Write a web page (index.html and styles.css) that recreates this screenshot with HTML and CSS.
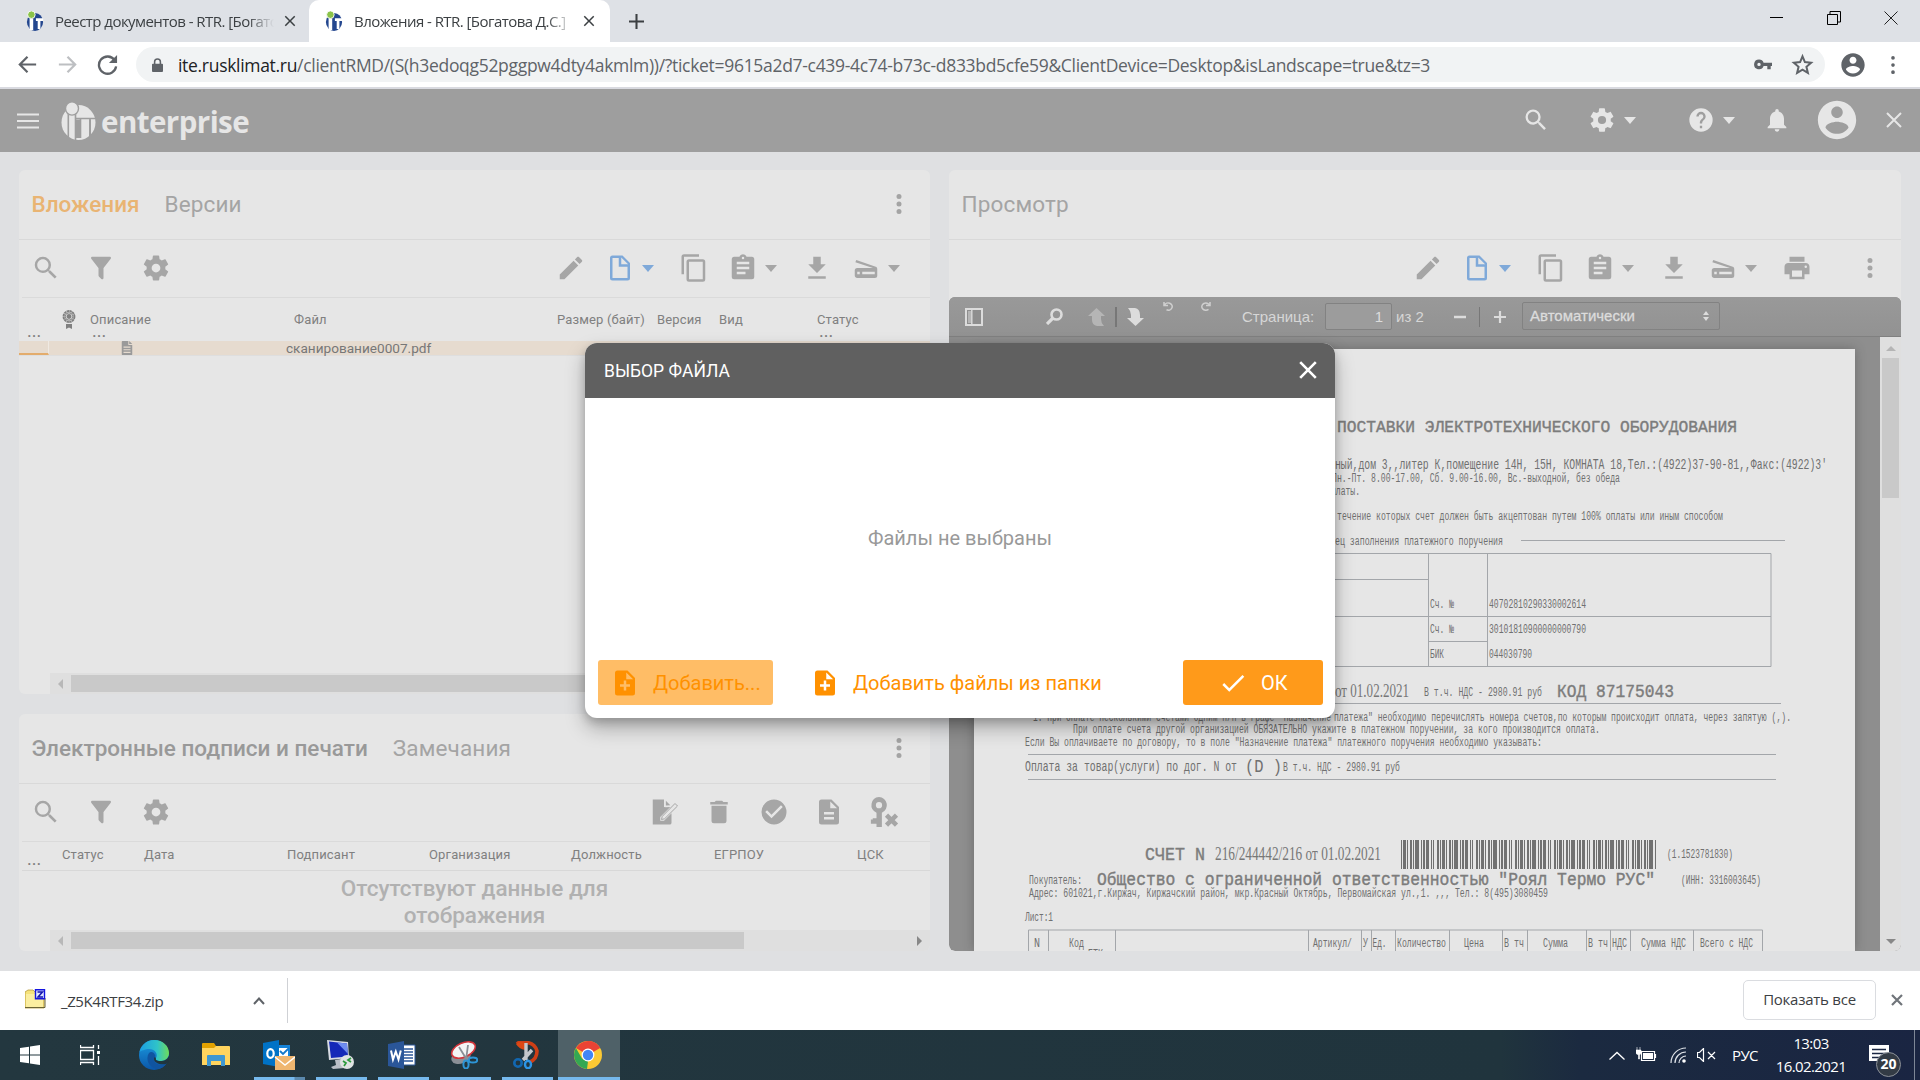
FILE: index.html
```html
<!DOCTYPE html>
<html lang="ru">
<head>
<meta charset="utf-8">
<title>Вложения - RTR.</title>
<link rel="stylesheet" href="styles.css">
</head>
<body>
<svg class="sprite" aria-hidden="true">
  <symbol id="search" viewBox="0 0 24 24"><path d="M15.5 14h-.79l-.28-.27A6.47 6.47 0 0 0 16 9.5 6.5 6.5 0 1 0 9.500 16c1.610 0 3.090-.59 4.230-1.570l.27.28v.79l5 4.990L20.490 19l-4.990-5zm-6 0C7.010 14 5 11.990 5 9.500S7.010 5 9.500 5 14 7.010 14 9.500 11.990 14 9.500 14z"/></symbol>
  <symbol id="filter" viewBox="0 0 24 24"><path d="M14 12v7.880c.04.3-.06.62-.29.83a1 1 0 0 1-1.410 0l-2.010-2.010a.99.99 0 0 1-.29-.83V12h-.03L4.210 4.620a1 1 0 0 1 .17-1.400c.19-.14.4-.22.62-.22h14c.22 0 .43.08.62.22a1 1 0 0 1 .17 1.400L14.030 12z"/></symbol>
  <symbol id="gear" viewBox="0 0 24 24"><path d="M12 15.500A3.500 3.500 0 0 1 8.500 12 3.500 3.500 0 0 1 12 8.500a3.500 3.500 0 0 1 3.500 3.500 3.500 3.500 0 0 1-3.500 3.500m7.430-2.530c.04-.32.07-.64.07-.97s-.03-.66-.07-1l2.110-1.630c.19-.15.24-.42.12-.64l-2-3.460c-.12-.22-.39-.31-.61-.22l-2.490 1c-.52-.39-1.060-.73-1.690-.98l-.37-2.650A.506.506 0 0 0 14 2h-4c-.25 0-.46.18-.5.42l-.37 2.650c-.63.25-1.170.59-1.690.98l-2.490-1c-.22-.09-.49 0-.61.22l-2 3.460c-.13.22-.07.49.12.64L4.570 11c-.04.34-.07.67-.07 1s.03.65.07.97l-2.110 1.660c-.19.15-.25.42-.12.64l2 3.460c.12.22.39.3.61.22l2.490-1.010c.52.4 1.060.74 1.690.99l.37 2.650c.04.24.25.42.5.42h4c.25 0 .46-.18.5-.42l.37-2.650c.63-.26 1.170-.59 1.690-.99l2.490 1.010c.22.08.49 0 .61-.22l2-3.460c.12-.22.07-.49-.12-.64z"/></symbol>
  <symbol id="pencil" viewBox="0 0 24 24"><path d="M20.710 7.040c.39-.39.39-1.040 0-1.410l-2.340-2.340c-.37-.39-1.020-.39-1.410 0l-1.840 1.830 3.750 3.750M3 17.250V21h3.750L17.810 9.930l-3.750-3.750z"/></symbol>
  <symbol id="doc" viewBox="0 0 24 24"><path d="M13 9h5.500L13 3.500V9M6 2h8l6 6v12a2 2 0 0 1-2 2H6a2 2 0 0 1-2-2V4a2 2 0 0 1 2-2m5 2H6v16h12v-9h-7z"/></symbol>
  <symbol id="copy" viewBox="0 0 24 24"><path d="M19 21H8V7h11m0-2H8a2 2 0 0 0-2 2v14a2 2 0 0 0 2 2h11a2 2 0 0 0 2-2V7a2 2 0 0 0-2-2m-3-4H4a2 2 0 0 0-2 2v14h2V3h12z"/></symbol>
  <symbol id="clip" viewBox="0 0 24 24"><path d="M19 3h-4.180C14.400 1.840 13.300 1 12 1s-2.400.84-2.820 2H5a2 2 0 0 0-2 2v14a2 2 0 0 0 2 2h14a2 2 0 0 0 2-2V5a2 2 0 0 0-2-2m-7 0a1 1 0 1 1 0 2 1 1 0 0 1 0-2m2 14H7v-2h7v2m3-4H7v-2h10v2m0-4H7V7h10v2z"/></symbol>
  <symbol id="down" viewBox="0 0 24 24"><path d="M19 9h-4V3H9v6H5l7 7 7-7zM5 18.500v2h14v-2z"/></symbol>
  <symbol id="scan" viewBox="0 0 24 24"><path d="M4.200 5.500 3.500 7.400 17.600 12H5a2 2 0 0 0-2 2v4c0 1.100.9 2 2 2h14a2 2 0 0 0 2-2v-5.300c0-.8-.5-1.600-1.200-1.800L4.200 5.500zM7 17H5v-2h2v2zm12 0H9v-2h10v2z"/></symbol>
  <symbol id="print" viewBox="0 0 24 24"><path d="M19 8H5c-1.660 0-3 1.340-3 3v6h4v4h12v-4h4v-6c0-1.660-1.340-3-3-3zm-3 11H8v-5h8v5zm3-7a1 1 0 1 1 0-2 1 1 0 0 1 0 2zM18 3H6v4h12V3z"/></symbol>
  <symbol id="dots" viewBox="0 0 24 24"><path d="M12 16a2 2 0 1 1 0 4 2 2 0 0 1 0-4m0-6a2 2 0 1 1 0 4 2 2 0 0 1 0-4m0-6a2 2 0 1 1 0 4 2 2 0 0 1 0-4z"/></symbol>
  <symbol id="account" viewBox="0 0 24 24"><path d="M12 2C6.480 2 2 6.480 2 12s4.480 10 10 10 10-4.480 10-10S17.520 2 12 2zm0 3c1.660 0 3 1.340 3 3s-1.340 3-3 3-3-1.340-3-3 1.340-3 3-3zm0 14.200c-2.500 0-4.710-1.280-6-3.220.03-1.990 4-3.080 6-3.080 1.990 0 5.970 1.090 6 3.080-1.290 1.940-3.500 3.220-6 3.220z"/></symbol>
  <symbol id="help" viewBox="0 0 24 24"><path d="M12 2a10 10 0 1 0 0 20 10 10 0 0 0 0-20zm1 17h-2v-2h2v2zm2.070-7.750-.9.92C13.450 12.900 13 13.500 13 15h-2v-.5c0-1.100.45-2.100 1.170-2.830l1.240-1.260c.37-.36.59-.86.59-1.410a2 2 0 1 0-4 0H8a4 4 0 1 1 8 0c0 .88-.36 1.680-.93 2.250z"/></symbol>
  <symbol id="bell" viewBox="0 0 24 24"><path d="M12 22c1.100 0 2-.9 2-2h-4a2 2 0 0 0 2 2zm6-6v-5c0-3.070-1.640-5.640-4.500-6.320V4a1.500 1.500 0 0 0-3 0v.68C7.630 5.360 6 7.920 6 11v5l-2 2v1h16v-1l-2-2z"/></symbol>
  <symbol id="close" viewBox="0 0 24 24"><path d="M19 6.410 17.590 5 12 10.590 6.410 5 5 6.410 10.590 12 5 17.590 6.410 19 12 13.410 17.590 19 19 17.590 13.410 12z"/></symbol>
  <symbol id="fileplus" viewBox="0 0 24 24"><path d="M13 9h5.500L13 3.500V9M6 2h8l6 6v12a2 2 0 0 1-2 2H6a2 2 0 0 1-2-2V4a2 2 0 0 1 2-2m5 16h2v-3h3v-2h-3v-3h-2v3H8v2h3z"/></symbol>
  <symbol id="check" viewBox="0 0 24 24"><path d="M21 7 9 19l-5.500-5.500 1.410-1.410L9 16.170 19.590 5.590z"/></symbol>
  <symbol id="trash" viewBox="0 0 24 24"><path d="M19 4h-3.500l-1-1h-5l-1 1H5v2h14M6 19a2 2 0 0 0 2 2h8a2 2 0 0 0 2-2V7H6z"/></symbol>
  <symbol id="okcircle" viewBox="0 0 24 24"><path d="M12 2a10 10 0 1 0 0 20 10 10 0 0 0 0-20zm-2 15-5-5 1.410-1.410L10 14.170l7.590-7.590L19 8l-9 9z"/></symbol>
  <symbol id="filetext" viewBox="0 0 24 24"><path d="M14 2H6a2 2 0 0 0-2 2v16a2 2 0 0 0 2 2h12a2 2 0 0 0 2-2V8l-6-6zm2 16H8v-2h8v2zm0-4H8v-2h8v2zm-3-5V3.500L18.500 9H13z"/></symbol>
  <symbol id="fileedit" viewBox="0 0 24 24"><path d="M3 2h9v6l1.500.2L17 8l-8 8v3h3l6-6v7.500a1.500 1.500 0 0 1-1.500 1.500H3z"/><path d="M13.500 3 17 6.600l-3.500.2z"/><path d="m10 18 .6-2.500L20.800 5.200l2 2L12.500 17.400z" fill="#e6e6e6" stroke="currentColor" stroke-width=".8"/></symbol>
  <symbol id="keyx" viewBox="0 0 24 24"><path fill-rule="evenodd" d="M8 0a6.500 6.500 0 0 1 2.300 12.500V24H6v-2.700H1.500V18H3v-1h3v-4.500A6.500 6.500 0 0 1 8 0zm0 4a2.500 2.500 0 1 0 0 5 2.500 2.500 0 0 0 0-5z"/><path d="m14 14.500 8 8m0-8-8 8" stroke="currentColor" stroke-width="3.600"/></symbol>
  <symbol id="fav" viewBox="0 0 20 22"><ellipse cx="10" cy="12" rx="9" ry="10" fill="#24478f"/><path d="M4 8h4v13H4zM11 8h8v3h-3v9h-3v-9h-2z" fill="#fff"/><circle cx="6" cy="4" r="4.200" fill="#8bc34a" stroke="#fff"/></symbol>
  <symbol id="updown" viewBox="0 0 6 10"><path d="M0 4 3 0l3 4zM0 6h6l-3 4z"/></symbol>
</svg>

<div class="tabstrip">
  <div class="tab"><svg class="fav"><use href="#fav"/></svg><span class="tab-title">Реестр документов - RTR. [Богатова</span><svg class="tab-x"><use href="#close"/></svg></div>
  <div class="tab active"><svg class="fav"><use href="#fav"/></svg><span class="tab-title">Вложения - RTR. [Богатова Д.С.]</span><svg class="tab-x"><use href="#close"/></svg></div>
  <svg class="newtab" viewBox="0 0 16 16"><path d="M8 0v16M0 8h16" stroke="#3c4043" stroke-width="2.200"/></svg>
  <div class="winctl">
    <svg viewBox="0 0 14 14"><path d="M0 6.500h13" stroke="#000"/></svg>
    <svg viewBox="0 0 14 14"><path d="M.5 3.500h10v10H.5zM3 3V.5h10.500V11H11" stroke="#000" fill="none"/></svg>
    <svg viewBox="0 0 14 14"><path d="m.5.5 13 13m0-13-13 13" stroke="#222"/></svg>
  </div>
</div>
<div class="addressbar">
  <svg class="nav" viewBox="0 0 24 24"><path d="M21 12H4m8-8-8 8 8 8" stroke="#5f6368" stroke-width="2.300" fill="none"/></svg>
  <svg class="nav" viewBox="0 0 24 24"><path d="M3 12h17m-8-8 8 8-8 8" stroke="#bdbfc2" stroke-width="2.300" fill="none"/></svg>
  <svg class="nav" viewBox="0 0 24 24"><path d="M19.500 7.500A9 9 0 1 0 21 14" stroke="#5f6368" stroke-width="2.400" fill="none"/><path d="M22 2v8.500h-8.500z" fill="#5f6368"/></svg>
  <div class="omnibox">
    <svg class="lock" viewBox="0 0 12 15"><path d="M2 6V4a4 4 0 0 1 8 0v2h1q1 0 1 1v7q0 1-1 1H1q-1 0-1-1V7q0-1 1-1zm1.700 0h4.600V4a2.300 2.300 0 0 0-4.600 0z" fill="#5f6368"/></svg>
    <span class="url"><b>ite.rusklimat.ru</b>/clientRMD/(S(h3edoqg52pggpw4dty4akmlm))/?ticket=9615a2d7-c439-4c74-b73c-d833bd5cfe59&amp;ClientDevice=Desktop&amp;isLandscape=true&amp;tz=3</span>
    <svg class="key" viewBox="0 0 18 11"><path fill-rule="evenodd" d="M5 .5a4.800 4.800 0 0 1 4.600 3.200H18v3.400h-1.300v3.200h-3.400V7.100H9.600A4.900 4.900 0 1 1 5 .5zm0 3.200a1.700 1.700 0 1 0 0 3.400 1.700 1.700 0 0 0 0-3.400z" fill="#5f6368"/></svg>
    <svg class="star" viewBox="0 0 24 24"><path d="m12 3.500 2.500 6 6.500.6-4.900 4.300 1.500 6.300-5.600-3.400-5.600 3.400 1.500-6.300L3 10.100l6.500-.6z" fill="none" stroke="#5f6368" stroke-width="2.100"/></svg>
  </div>
  <svg class="profile"><use href="#account"/></svg>
  <svg class="cdots" viewBox="0 0 24 24"><path d="M12 3.500v.1m0 8.400v.1m0 8.400v.1" stroke="#5f6368" stroke-width="4.400" stroke-linecap="round"/></svg>
</div>

<header class="apphead">
  <svg class="burger" viewBox="0 0 22 16"><path d="M0 1.500h22M0 8h22M0 14.500h22" stroke="currentColor" stroke-width="2.200"/></svg>
  <svg class="logo" viewBox="0 0 35 38"><ellipse cx="17.500" cy="20.500" rx="17" ry="17.500" fill="currentColor"/><path d="M6 10h8.500v28M19.500 17v19M29 17v17" stroke="#9e9e9e" stroke-width="1.600" fill="none"/><path d="M14 16.500h21" stroke="#9e9e9e" stroke-width="1.500"/><path d="M14.500 17.500h4.500V36h-4.500z" fill="#9e9e9e"/><path d="M28 17.500h2V35h-2zM6.500 10h1.600v26H6.500z" fill="#9e9e9e"/><ellipse cx="11" cy="6.500" rx="6.500" ry="6.600" fill="currentColor" stroke="#9e9e9e" stroke-width="1.400"/></svg>
  <span class="brand">enterprise</span>
  <svg class="ic h1"><use href="#search"/></svg>
  <svg class="ic h2"><use href="#gear"/></svg><i class="caret"></i>
  <svg class="ic h3"><use href="#help"/></svg><i class="caret"></i>
  <svg class="ic h4"><use href="#bell"/></svg>
  <svg class="ava"><use href="#account"/></svg>
  <svg class="hx" viewBox="0 0 16 16"><path d="m1 1 14 14m0-14L1 15" stroke="currentColor" stroke-width="2"/></svg>
</header>

<main class="app">
  <div class="left">
    <section class="panel p1">
      <div class="phead"><span class="on">Вложения</span><span>Версии</span><svg class="ic"><use href="#dots"/></svg></div>
      <div class="tools">
        <div class="lt"><svg class="ic"><use href="#search"/></svg><svg class="ic"><use href="#filter"/></svg><svg class="ic"><use href="#gear"/></svg></div>
        <div class="rt">
          <svg class="ic"><use href="#pencil"/></svg>
          <div class="split blue"><svg class="ic"><use href="#doc"/></svg><i class="caret"></i></div>
          <svg class="ic"><use href="#copy"/></svg>
          <div class="split"><svg class="ic"><use href="#clip"/></svg><i class="caret"></i></div>
          <svg class="ic"><use href="#down"/></svg>
          <div class="split"><svg class="ic"><use href="#scan"/></svg><i class="caret"></i></div>
        </div>
      </div>
      <div class="cols cols1">
        <span><br><em>...</em></span>
        <span><svg class="medal" viewBox="0 0 14 20"><path d="M4 15h6v5l-3-1.500L4 20z"/><circle cx="7" cy="7.500" r="5.400" fill="none" stroke="currentColor" stroke-width="2" stroke-dasharray="2.400 .4"/><circle cx="7" cy="7.500" r="3.700" fill="none" stroke="currentColor"/><circle cx="7" cy="7.500" r="2.400"/></svg></span>
        <span>Описание<br><em>...</em></span><span>Файл</span><span>Размер (байт)</span><span>Версия</span><span>Вид</span><span>Статус<br><em>...</em></span>
      </div>
      <div class="row"><span class="mark"></span><span class="cell"><svg class="fi" viewBox="0 0 12 16"><path d="M1 0h6.500v4.500H12V15q0 1-1 1H1q-1 0-1-1V1q0-1 1-1zm7.500 0L12 3.500H8.500z"/><path d="M2 7h8M2 10h8M2 13h8" stroke="#e6dbcf" stroke-width="1.200"/></svg></span><span class="fname">сканирование0007.pdf</span></div>
      <div class="hscroll"><i class="al"></i><b class="thumb"></b></div>
    </section>
    <section class="panel p2">
      <div class="phead"><span class="dark">Электронные подписи и печати</span><span>Замечания</span><svg class="ic"><use href="#dots"/></svg></div>
      <div class="tools">
        <div class="lt"><svg class="ic"><use href="#search"/></svg><svg class="ic"><use href="#filter"/></svg><svg class="ic"><use href="#gear"/></svg></div>
        <div class="rt wide">
          <svg class="ic"><use href="#fileedit"/></svg><svg class="ic"><use href="#trash"/></svg><svg class="ic"><use href="#okcircle"/></svg><svg class="ic"><use href="#filetext"/></svg><svg class="ic"><use href="#keyx"/></svg>
        </div>
      </div>
      <div class="cols cols2"><span><em>...</em></span><span>Статус</span><span>Дата</span><span>Подписант</span><span>Организация</span><span>Должность</span><span>ЕГРПОУ</span><span>ЦСК</span></div>
      <div class="nodata">Отсутствуют данные для<br>отображения</div>
      <div class="hscroll"><i class="al"></i><b class="thumb short"></b><i class="ar"></i></div>
    </section>
  </div>
  <section class="panel p3">
    <div class="phead"><span>Просмотр</span></div>
    <div class="tools">
      <div class="rt">
        <svg class="ic"><use href="#pencil"/></svg>
        <div class="split blue"><svg class="ic"><use href="#doc"/></svg><i class="caret"></i></div>
        <svg class="ic"><use href="#copy"/></svg>
        <div class="split"><svg class="ic"><use href="#clip"/></svg><i class="caret"></i></div>
        <svg class="ic"><use href="#down"/></svg>
        <div class="split"><svg class="ic"><use href="#scan"/></svg><i class="caret"></i></div>
        <svg class="ic"><use href="#print"/></svg>
        <svg class="ic last"><use href="#dots"/></svg>
      </div>
    </div>
    <div class="viewer">
      <div class="vbar">
        <svg class="side" viewBox="0 0 18 18"><rect x="1" y="1" width="16" height="16" fill="#8e8e8e" stroke="#dcdcdc" stroke-width="2"/><path d="M3 3h3v12H3z" fill="#b5b5b5"/><path d="M6.800 2v14" stroke="#dcdcdc" stroke-width="1.400"/></svg>
        <svg class="vfind" viewBox="0 0 17 17"><circle cx="10.500" cy="6.500" r="5" fill="none" stroke="#dcdcdc" stroke-width="2.600"/><path d="m7 10-6 6" stroke="#dcdcdc" stroke-width="3.200"/></svg>
        <svg class="vup" viewBox="0 0 17 18"><path d="M8.500 0 17 8h-4v3q0 4 3 7H9q-5-1-5-6V8H0z" fill="#b5b5b5"/></svg>
        <i class="vsep"></i>
        <svg class="vdn" viewBox="0 0 17 18"><path d="M8.500 18 17 10h-4V7q0-6-5-7H1q3 3 3 7v3H0z" fill="#dcdcdc"/></svg>
        <svg class="rot r1" viewBox="0 0 10 10"><path d="M1 1v3.600h4M1.500 4.200a4 3.600 0 1 1 2 4.600" fill="none" stroke="#cfcfcf" stroke-width="1.500"/></svg>
        <svg class="rot r2" viewBox="0 0 10 10"><path d="M9 1v3.600H5M8.500 4.200a4 3.600 0 1 0-1 4.100" fill="none" stroke="#cfcfcf" stroke-width="1.500"/></svg>
        <span class="vlabel">Страница:</span><span class="vinput">1</span><span class="vof">из 2</span>
        <svg class="vmin" viewBox="0 0 12 12"><path d="M0 6h12" stroke="#dcdcdc" stroke-width="2.400"/></svg>
        <i class="vsep thin"></i>
        <svg class="vplus" viewBox="0 0 12 12"><path d="M0 6h12M6 0v12" stroke="#dcdcdc" stroke-width="2.200"/></svg>
        <span class="vselect">Автоматически<svg class="ud"><use href="#updown"/></svg></span>
      </div>
      <div class="vbody">
        <div class="page">
          <svg class="sheet" viewBox="974 349 881 602">
            <g class="rules"><path d="M1521 540.500h264M1300 553.500h471v113h-471M1428.500 553v113M1487.500 553v113M1300 579.500h128M1300 616.500h471M1428 641.500h59M1300 703.500h481M1028 754.500h748M1028 779.500h748M1028.500 952v-22h734v22M1048.500 930v22M1115.500 930v22M1308.500 930v22M1361.500 930v22M1371.500 930v22M1395.500 930v22M1449.500 930v22M1502.500 930v22M1527.500 930v22M1586.500 930v22M1610.500 930v22M1630.500 930v22M1693.500 930v22"/></g>
            <path class="bars" d="M1401 854.500h255"/>
            <g class="mono">
              <text class="b" x="1337" y="432" font-size="16.500" textLength="400" lengthAdjust="spacingAndGlyphs">ПОСТАВКИ ЭЛЕКТРОТЕХНИЧЕСКОГО ОБОРУДОВАНИЯ</text>
              <text x="1335" y="469" font-size="14" textLength="492" lengthAdjust="spacingAndGlyphs">ный,дом 3,,литер К,помещение 14Н, 15Н, КОМНАТА 18,Тел.:(4922)37-90-81,,Факс:(4922)3'</text>
              <text x="1332" y="482" textLength="288" lengthAdjust="spacingAndGlyphs">Пн.-Пт. 8.00-17.00, Сб. 9.00-16.00, Вс.-выходной, без обеда</text>
              <text x="1331" y="494.500" textLength="29" lengthAdjust="spacingAndGlyphs">платы.</text>
              <text x="1337" y="519.500" textLength="386" lengthAdjust="spacingAndGlyphs">течение которых счет должен быть акцептован путем 100% оплаты или иным способом</text>
              <text x="1335" y="545" textLength="168" lengthAdjust="spacingAndGlyphs">ец заполнения платежного поручения</text>
              <text x="1430" y="607.500" textLength="24" lengthAdjust="spacingAndGlyphs">Сч. №</text>
              <text x="1489" y="607.500" textLength="97" lengthAdjust="spacingAndGlyphs">40702810290330002614</text>
              <text x="1430" y="633" textLength="24" lengthAdjust="spacingAndGlyphs">Сч. №</text>
              <text x="1489" y="633" textLength="97" lengthAdjust="spacingAndGlyphs">30101810900000000790</text>
              <text x="1430" y="658" textLength="14" lengthAdjust="spacingAndGlyphs">БИК</text>
              <text x="1489" y="658" textLength="43" lengthAdjust="spacingAndGlyphs">044030790</text>
              <text x="1424" y="696" textLength="118" lengthAdjust="spacingAndGlyphs">В т.ч. НДС - 2980.91 руб</text>
              <text class="b" x="1557" y="697" font-size="18.500" textLength="117" lengthAdjust="spacingAndGlyphs">КОД 87175043</text>
              <text x="1033" y="720.500" textLength="298" lengthAdjust="spacingAndGlyphs">1. При оплате несколькими счетами одним п/п в графе "Назначение</text>
              <text x="1334" y="720.500" textLength="457" lengthAdjust="spacingAndGlyphs">платежа" необходимо перечислять номера счетов,по которым происходит оплата, через запятую (,).</text>
              <text x="1073" y="733" textLength="527" lengthAdjust="spacingAndGlyphs">При оплате счета другой организацией ОБЯЗАТЕЛЬНО укажите в платежном поручении, за кого производится оплата.</text>
              <text x="1025" y="745.500" textLength="517" lengthAdjust="spacingAndGlyphs">Если Вы оплачиваете по договору, то в поле "Назначение платежа" платежного поручения необходимо указывать:</text>
              <text x="1025" y="770.500" font-size="14" textLength="212" lengthAdjust="spacingAndGlyphs">Оплата за товар(услуги) по дог. N от</text>
              <text x="1245" y="772" font-size="18" textLength="37" lengthAdjust="spacingAndGlyphs">(D&#160;)</text>
              <text x="1283" y="770.500" textLength="117" lengthAdjust="spacingAndGlyphs">В т.ч. НДС - 2980.91 руб</text>
              <text class="b" x="1145" y="859.500" font-size="18" textLength="60" lengthAdjust="spacingAndGlyphs">СЧЕТ N</text>
              <text x="1667" y="858" textLength="66" lengthAdjust="spacingAndGlyphs">(1.1523781830)</text>
              <text x="1029" y="883.500" textLength="53" lengthAdjust="spacingAndGlyphs">Покупатель:</text>
              <text class="b" x="1097" y="885" font-size="17.500" textLength="558" lengthAdjust="spacingAndGlyphs">Общество с ограниченной ответственностью "Роял Термо РУС"</text>
              <text x="1681" y="884" textLength="80" lengthAdjust="spacingAndGlyphs">(ИНН: 3316003645)</text>
              <text x="1029" y="896.500" textLength="519" lengthAdjust="spacingAndGlyphs">Адрес: 601021,г.Киржач, Киржачский район, мкр.Красный Октябрь, Первомайская ул.,1. ,,, Тел.: 8(495)3080459</text>
              <text x="1025" y="921" textLength="28" lengthAdjust="spacingAndGlyphs">Лист:1</text>
              <text x="1034" y="947" textLength="6" lengthAdjust="spacingAndGlyphs">N</text>
              <text x="1069" y="947" textLength="15" lengthAdjust="spacingAndGlyphs">Код</text>
              <text x="1313" y="947" textLength="39" lengthAdjust="spacingAndGlyphs">Артикул/</text>
              <text x="1363" y="947" textLength="5" lengthAdjust="spacingAndGlyphs">У</text>
              <text x="1372.500" y="947" textLength="14" lengthAdjust="spacingAndGlyphs">Ед.</text>
              <text x="1397" y="947" textLength="49" lengthAdjust="spacingAndGlyphs">Количество</text>
              <text x="1464" y="947" textLength="20" lengthAdjust="spacingAndGlyphs">Цена</text>
              <text x="1504" y="947" textLength="20" lengthAdjust="spacingAndGlyphs">В тч</text>
              <text x="1543" y="947" textLength="25" lengthAdjust="spacingAndGlyphs">Сумма</text>
              <text x="1588" y="947" textLength="20" lengthAdjust="spacingAndGlyphs">В тч</text>
              <text x="1612" y="947" textLength="15" lengthAdjust="spacingAndGlyphs">НДС</text>
              <text x="1641" y="947" textLength="45" lengthAdjust="spacingAndGlyphs">Сумма НДС</text>
              <text x="1700" y="947" textLength="53" lengthAdjust="spacingAndGlyphs">Всего с НДС</text>
              <text x="1088" y="958" textLength="15" lengthAdjust="spacingAndGlyphs">ЕТК</text>
            </g>
            <g class="serif">
              <text x="1335" y="697" font-size="18" textLength="74" lengthAdjust="spacingAndGlyphs">от 01.02.2021</text>
              <text x="1215" y="860" font-size="18" textLength="166" lengthAdjust="spacingAndGlyphs">216/244442/216 от 01.02.2021</text>
            </g>
          </svg>
        </div>
        <div class="vscroll"><i class="au"></i><b></b><i class="ad"></i></div>
      </div>
    </div>
  </section>
  <div class="modal">
    <div class="mhead"><span>ВЫБОР ФАЙЛА</span><svg viewBox="0 0 18 18"><path d="m1.200 1.200 15.600 15.600m0-15.600L1.200 16.800" stroke="#fff" stroke-width="2.600"/></svg></div>
    <div class="mbody">Файлы не выбраны</div>
    <div class="mfoot">
      <div class="btn soft"><svg class="ic"><use href="#fileplus"/></svg>Добавить...</div>
      <div class="btn flat"><svg class="ic"><use href="#fileplus"/></svg>Добавить файлы из папки</div>
      <div class="btn solid"><svg class="ic"><use href="#check"/></svg>ОК</div>
    </div>
  </div>
</main>

<div class="downloads">
  <svg class="zip" viewBox="0 0 21 20"><path d="M0 3 3 1h5l2 2h9v16H0z" fill="#f6e27a" stroke="#b59b3c" stroke-width=".8"/><path d="M1 5h17v13H1z" fill="#fbeea0"/><path d="M0 18.500h20V9" stroke="#6b6434" fill="none"/><path d="M10.500.8h9v9h-9z" fill="#dfe6ff" stroke="#1414e0" stroke-width="1.400"/><path d="M12.500 3h5l-4.500 5h5" stroke="#1414b0" stroke-width="1.500" fill="none"/></svg>
  <span class="zname">_Z5K4RTF34.zip</span>
  <svg class="chev" viewBox="0 0 12 8"><path d="m1 7 5-5.500L11 7" stroke="#5f6368" stroke-width="2" fill="none"/></svg>
  <i class="dsep"></i>
  <span class="showall">Показать все</span>
  <svg class="dx" viewBox="0 0 12 12"><path d="m1 1 10 10m0-10L1 11" stroke="#70757a" stroke-width="2.200"/></svg>
</div>

<div class="taskbar">
  <div class="task"><svg width="20" height="20" viewBox="0 0 20 20"><path d="M0 3 9 1.700V9.500H0zM10 1.500 20 0v9.500H10zM0 10.500h9v7.800L0 17zM10 10.500h10V20l-10-1.500z" fill="#fff"/></svg></div>
  <div class="task tv"><svg width="21" height="20" viewBox="0 0 21 20"><path d="M.5 0v2.500h13V0M.5 20v-2.500h13V20M.5 5.500h13v9H.5zM18.500 0v4M18.500 11v9" stroke="#fff" stroke-width="1.300" fill="none"/><path d="M17 6h3v3h-3z" fill="#fff"/></svg></div>
  <div class="task"><svg width="30" height="30" viewBox="0 0 30 30"><defs><linearGradient id="e1" x1="0" x2="1"><stop offset="0" stop-color="#1b9de2"/><stop offset=".6" stop-color="#2fc3c9"/><stop offset="1" stop-color="#6fdc5a"/></linearGradient><linearGradient id="e2" y1="0" y2="1" x1="0" x2="0"><stop offset="0" stop-color="#1b9de2"/><stop offset="1" stop-color="#0b56a8"/></linearGradient></defs><circle cx="15" cy="15" r="15" fill="url(#e2)"/><path d="M.5 12C2 5 8 0 15 0c9 0 15 6 15 13 0 5-4 8-8 8-4 0-6-1-5-3 2-3 0-9-7-9-4 0-8 2-9.500 3z" fill="url(#e1)"/><path d="M10 13c-4 6 0 15 8 16 4 0 8-3 10-6-4 3-12 2-13-3 0-2 2-3 1-5-1-3-4-4-6-2z" fill="#1054a0"/><path d="M17 18c-1 2 1 3 5 3 3 0 6-1 8-5l.5 5-3.500 3c-6 1-12-1-12-5 0-2 1-2 2-1z" fill="#20353e"/></svg></div>
  <div class="task"><svg width="28" height="24" viewBox="0 0 28 24"><path d="M0 1q0-1 1-1h11l2 3v4H0z" fill="#e2a100"/><path d="M0 5h12l2-2h13q1 0 1 1v18H0z" fill="#ffd45e"/><path d="M5 13q0-1 1-1h16q1 0 1 1v10h-4v-5h-10v5H5z" fill="#3e97d1"/></svg></div>
  <div class="task run two"><svg width="32" height="32" viewBox="0 0 32 32"><path d="M12 8h15v16H12z" fill="#fff"/><path d="M14 6h13v14H14z" fill="#1683d8"/><path d="M16 9h9v8h-9z" fill="#fff"/><path d="m17 12 3 3 6-6" stroke="#1478ca" stroke-width="1.800" fill="none"/><path d="M0 4 16 1v27L0 25z" fill="#0072c6"/><ellipse cx="7.500" cy="14.500" rx="3.200" ry="4.400" fill="none" stroke="#fff" stroke-width="2.200"/><path d="M12 17h20v14H12z" fill="#efb670"/><path d="m12 18 10 8 10-8" stroke="#fff" stroke-width="1.400" fill="none"/></svg></div>
  <div class="task run"><svg width="30" height="30" viewBox="0 0 30 30"><path d="m2 0 21 2 1 16-20 2z" fill="#d7dbe3"/><path d="m4 1.500 18 2 1 13L6 18z" fill="#1529b8"/><path d="m12 2.500 10 1 .6 10z" fill="#6f8df0"/><path d="m10 20 6-1 1 6 3 3-12 1-2-2 5-2z" fill="#b9bec6"/><circle cx="22" cy="22" r="7" fill="#dfe3e4"/><path d="m18 21 3 2-2 3m7-8-3 2 3 2" stroke="#2c9a3d" stroke-width="1.700" fill="none"/></svg></div>
  <div class="task run"><svg width="28" height="28" viewBox="0 0 28 28"><path d="M14 4h13v20H14z" fill="#fff" stroke="#2a5699"/><path d="M16 8h9M16 11h9M16 14h9M16 17h9M16 20h9" stroke="#2a5699" stroke-width="1.400"/><path d="M0 3 16 0v28L0 25z" fill="#2a5699"/><path d="m3 9.500 2 9 2.800-8 2.700 8 2.300-9" stroke="#fff" stroke-width="2" fill="none"/></svg></div>
  <div class="task run"><svg width="28" height="28" viewBox="0 0 28 28"><ellipse cx="11" cy="16" rx="10" ry="6.500" transform="rotate(-20 11 16)" fill="#8a8f96"/><ellipse cx="13.500" cy="9" rx="12.500" ry="7" transform="rotate(-24 13.500 9)" fill="#f4f4f4" stroke="#d2353b" stroke-width="1.600"/><path d="m9 6 8 13M18 4l-2 15" stroke="#8a8f96" stroke-width="1.800"/><ellipse cx="23" cy="19" rx="4.200" ry="2.500" fill="none" stroke="#2d95d6" stroke-width="2"/><ellipse cx="16" cy="23.500" rx="2.600" ry="4" fill="none" stroke="#2d95d6" stroke-width="2"/></svg></div>
  <div class="task run"><svg width="26" height="28" viewBox="0 0 26 28"><path d="M4 3Q8-1 14 1.500q8 1 10 8.500 0 8-7 11" fill="none" stroke="#cf3f16" stroke-width="3.600"/><path d="M3 3q5-4 10 0l-1 6q-6-1-9-6z" fill="#dd4814"/><path d="M13 2v17M19 9l-9 10" stroke="#c4c8cc" stroke-width="3.400"/><circle cx="5" cy="22" r="3.700" fill="none" stroke="#1267b0" stroke-width="2.600"/><ellipse cx="15" cy="23.500" rx="3" ry="3.700" fill="none" stroke="#2d95e6" stroke-width="2.400"/></svg></div>
  <div class="task run on"><svg width="28" height="28" viewBox="0 0 28 28"><circle cx="14" cy="14" r="14" fill="#fcc934"/><path d="M14 14 1.900 7A14 14 0 0 1 26.100 7z" fill="#ea4335"/><path d="M14 0a14 14 0 0 1 12.100 7H14z" fill="#ea4335"/><path d="M1.900 7 8 17.500l6 3L13 28A14 14 0 0 1 1.900 7z" fill="#34a853"/><circle cx="14" cy="14" r="6.400" fill="#fff"/><circle cx="14" cy="14" r="5.200" fill="#4285f4"/></svg></div>
  <div class="tray">
    <svg width="16" height="9" viewBox="0 0 16 9"><path d="m.5 8.500 7.500-7 7.500 7" stroke="#fff" stroke-width="1.300" fill="none"/></svg>
    <svg class="bat" width="21" height="16" viewBox="0 0 21 16"><path d="M5.500 4.500h13v9h-13zM19.500 7v4" stroke="#fff" fill="none" stroke-width="1.200"/><path d="M7 6h10v6H7z" fill="#fff"/><path d="M0 3h5v3.500L3.500 8V12h-1V8L0 6.500zM1 0v3M4 0v3" fill="#fff" stroke="#fff" stroke-width=".6"/></svg>
    <svg class="wifi" width="17" height="17" viewBox="0 0 17 17"><path d="M1 16A15 15 0 0 1 16 1M5 16A11 11 0 0 1 16 5M9 16a7 7 0 0 1 7-7" stroke="#dfe3e8" fill="none" stroke-width="1.200"/><circle cx="14" cy="14" r="1.800" fill="#fff"/></svg>
    <svg class="spk" width="19" height="14" viewBox="0 0 19 14"><path d="M.5 4.500h2l4-4v13l-4-4h-2zM11 4l7 7m0-7-7 7" stroke="#fff" fill="none" stroke-width="1.200"/></svg>
    <span class="lang">РУС</span>
    <span class="clock">13:03<br>16.02.2021</span>
    <div class="note"><svg width="20" height="20" viewBox="0 0 20 20"><path d="M0 0h20v16h-6v4l-4-4H0z" fill="#fff"/><path d="M3 4.500h14M3 8.500h14M3 12.500h8" stroke="#1b2742" stroke-width="1.300"/></svg><b>20</b></div>
    <i class="desk"></i>
  </div>
</div>
</body>
</html>
```
FILE: styles.css
```css
* { box-sizing: border-box; }
body {
  margin: 0; width: 1920px; height: 1080px; overflow: hidden;
  display: flex; flex-direction: column;
  font-family: Roboto, "Liberation Sans", sans-serif;
  background: #dfe0e2;
}
.sprite { position: absolute; width: 0; height: 0; }
svg { display: block; flex: none; fill: currentColor; }
i, em { font-style: normal; }
.ic { width: 30px; height: 30px; }
.caret { flex: none; width: 0; height: 0; border: 6.500px solid transparent; border-top: 7px solid currentColor; border-bottom: 0; }

/* browser chrome */
.tabstrip { height: 42px; background: #dee1e6; display: flex; align-items: center; font: 15px "Open Sans", sans-serif; color: #3c4043; flex: none; }
.tab { width: 309px; height: 42px; padding-left: 26px; display: flex; align-items: center; }
.tab.active { width: 301px; background: #fff; border-radius: 10px 10px 0 0; padding-left: 16px; }
.fav { width: 18px; height: 20px; }
.tab-title { width: 219px; margin-left: 11px; overflow: hidden; white-space: nowrap; letter-spacing: -.55px; -webkit-mask-image: linear-gradient(90deg, #000 88%, transparent); }
.tab-x { width: 18px; height: 18px; margin-left: 7px; }
.newtab { width: 15px; height: 15px; margin-left: 19px; }
.winctl { margin-left: auto; display: flex; gap: 43px; padding: 0 22px 6px 0; }
.winctl svg { width: 14px; height: 14px; }
.addressbar { height: 47px; flex: none; background: #fff; border-bottom: 2px solid #d9dae0; display: flex; align-items: center; padding: 0 15px 0 16px; }
.nav { width: 23px; height: 23px; margin-right: 17px; }
.omnibox { width: 1689px; height: 35px; border-radius: 18px; background: #f1f3f4; display: flex; align-items: center; padding-left: 16px; flex: none; }
.lock { width: 11px; height: 14px; margin-right: 15px; }
.url { font: 17.500px "Open Sans", sans-serif; color: #5f6368; width: 1576px; white-space: nowrap; letter-spacing: -.305px; }
.url b { font-weight: 400; color: #202124; }
.key { width: 18px; height: 13px; margin-right: 19px; }
.star { width: 23px; height: 23px; }
.profile { width: 28px; height: 28px; margin-left: 14px; color: #5f6368; }
.cdots { width: 20px; height: 20px; margin-left: 16px; }

/* application header */
.apphead { height: 63px; flex: none; background: #9e9e9e; color: #e6e6e6; display: flex; align-items: center; padding-left: 17px; }
.burger { width: 22px; height: 16px; }
.logo { width: 35px; height: 38px; margin-left: 22px; }
.brand { font: 700 29.500px/34px "Open Sans", sans-serif; letter-spacing: -.55px; margin: 3px 0 0 5px; width: 1421px; flex: none; }
.h2 { margin-left: 38px; margin-right: 8px; }
.apphead .ic { width: 28px; height: 28px; }
.h3 { margin: 0 8px 0 51px; }
.h4 { margin-left: 28px; }
.ava { width: 46px; height: 46px; margin-left: 23px; }
.hx { width: 16px; height: 16px; margin-left: 26px; }
.apphead .ic, .ava, .hx { margin-bottom: 1px; }

/* workspace */
.app { position: relative; height: 819px; flex: none; display: flex; gap: 19px; padding: 18px 19px 20px; }
.left { width: 911px; display: flex; flex-direction: column; gap: 20px; }
.panel { background: #e6e6e6; border-radius: 6px; display: flex; flex-direction: column; overflow: hidden; color: #a6a6a6; }
.p1 { height: 524px; }
.p2 { height: 237px; }
.p3 { width: 952px; height: 781px; }
.phead { height: 70px; flex: none; border-bottom: 1px solid #d9d9d9; display: flex; align-items: center; gap: 25px; padding: 0 16px 2px 12.500px; font-size: 22.500px; letter-spacing: .15px; color: #a4a4a4; white-space: nowrap; }
.phead .ic { margin-left: auto; }
.phead .on { color: #e9b473; font-weight: 500; letter-spacing: 0; }
.phead .dark { color: #999; font-weight: 500; letter-spacing: 0; }
.tools { height: 57px; flex: none; display: flex; align-items: center; padding: 0 25px 1px 12px; }
.lt { display: flex; gap: 25px; }
.rt { margin-left: auto; display: flex; gap: 19.500px; }
.rt.wide { gap: 25px; margin-right: 6px; }
.split { display: flex; align-items: center; gap: 6.500px; margin-right: 5.500px; }
.blue { color: #7fa9d9; }
.p3 .tools { padding-right: 16px; }
.last { margin-left: 24px; }
.cols { border-top: 1px solid #dadada; display: grid; font-size: 13px; letter-spacing: .15px; color: #808080; line-height: 18px; white-space: nowrap; flex: none; margin-left: 3px; }
.cols em { display: block; font-size: 18px; line-height: 10px; letter-spacing: 0; margin-top: -3px; }
.cols1 { height: 45px; padding: 13px 0 0 5px; grid-template-columns: 35px 28px 204px 263px 100px 62px 98px 1fr; }
.cols2 { height: 30px; padding: 4px 0 0 5px; border-bottom: 1px solid #d8d8d8; grid-template-columns: 35px 82px 143px 142px 142px 143px 143px 1fr; }
.cols2 em { margin-top: 8px; }
.cols1 br + em { padding-left: 2px; }
.cols1 span:first-child em, .cols2 em { padding-left: 0; }
.medal { width: 14px; height: 20px; margin-top: -2px; }
.row { height: 15px; flex: none; display: flex; background: #e6dbcf; border-bottom: 1px solid #dedede; color: #9a9a9a; margin-top: -1px; }
.mark { width: 30px; height: 14px; border-bottom: 2px solid #e3ac6c; border-right: 1px solid #efe9e2; }
.cell { width: 237px; padding-left: 72px; }
.fi { width: 12px; height: 14px; }
.fname { font-size: 13.600px; line-height: 14px; color: #777; }
.hscroll { margin: auto 0 0 31px; height: 21px; flex: none; background: #dfdfdf; display: flex; align-items: center; padding-left: 8px; color: #b8b8b8; }
.al { border: 5px solid transparent; border-right-color: currentColor; border-left: 0; }
.ar { border: 5px solid transparent; border-left: 5px solid #888; border-right: 0; margin: 0 8px 0 auto; }
.thumb { margin-left: 8px; height: 17px; width: 700px; background: #c9c9c9; }
.thumb.short { width: 673px; }
.nodata { padding-top: 4px; text-align: center; font-size: 22.500px; font-weight: 500; line-height: 27px; color: #b1b1b1; }

/* document viewer */
.viewer { height: 654px; flex: none; background: #8e8e8e; border-radius: 6px; overflow: hidden; }
.vbar { height: 40px; background: linear-gradient(#999, #929292); border-bottom: 1px solid #808080; display: flex; align-items: center; padding-left: 16px; font: 15px "Liberation Sans", sans-serif; color: #dcdcdc; white-space: nowrap; }
.side { width: 18px; height: 18px; }
.vfind { width: 17px; height: 17px; margin-left: 63px; }
.vup { width: 17px; height: 18px; margin-left: 25px; }
.vsep { width: 2px; height: 20px; background: #777; margin-left: 10px; }
.vsep.thin { width: 1px; margin-left: 13px; }
.vdn { width: 17px; height: 18px; margin-left: 10px; }
.rot { width: 10px; height: 10px; align-self: flex-start; margin: 4px 0 0 19px; }
.r2 { margin-left: 28px; }
.vlabel { margin-left: 31px; width: 83px; color: #d6d6d6; }
.vinput { width: 67px; height: 27px; line-height: 25px; border: 1px solid #828282; border-radius: 2px; background: #9c9c9c; text-align: right; padding-right: 8px; margin-top: -1px; }
.vof { margin-left: 4px; width: 58px; color: #d6d6d6; }
.vmin { width: 12px; height: 12px; }
.vplus { width: 12px; height: 12px; margin-left: 14px; }
.vselect { margin: -2px 0 0 16px; width: 198px; height: 28px; border: 1px solid #828282; border-radius: 2px; display: flex; align-items: center; justify-content: space-between; padding: 0 10px 0 7px; -webkit-text-stroke: .3px; }
.ud { width: 6px; height: 10px; }
.vbody { height: 614px; display: flex; justify-content: space-between; }
.page { margin: 12px 0 0 25px; width: 881px; height: 602px; background: #e6e6e6; box-shadow: 0 0 10px rgba(60,60,60,.4); }
.sheet { width: 881px; height: 602px; }
.mono { font-family: "Liberation Mono", monospace; font-size: 12.500px; fill: #707070; }
.mono .b { fill: #7c7c7c; stroke: #7c7c7c; stroke-width: .4px; }
.serif { font-family: "Liberation Serif", serif; fill: #777; }
.rules { fill: none; stroke: #a3a6aa; }
.bars { stroke: #707070; stroke-width: 29; stroke-dasharray: 1 1 3 1 1 2 2 1 1 1 4 2 1 1 2 1 3 2 1 1 1 3 2 1; }
.vscroll { width: 21px; background: #dfdfdf; display: flex; flex-direction: column; align-items: center; color: #b5b5b5; }
.vscroll b { width: 17px; height: 140px; background: #c9c9c9; }
.au { border: 5px solid transparent; border-bottom-color: currentColor; border-top: 0; margin: 9px 0 7px; }
.ad { border: 5px solid transparent; border-top-color: #888; border-bottom: 0; margin: auto 0 7px; }

/* file selection dialog */
.modal { position: absolute; left: 585px; top: 191px; width: 750px; height: 375px; background: #fff; border-radius: 12px; overflow: hidden; box-shadow: 0 10px 20px rgba(0,0,0,.28), 0 4px 8px rgba(0,0,0,.16); display: flex; flex-direction: column; }
.mhead { height: 55px; background: #606060; color: #fff; display: flex; align-items: center; justify-content: space-between; padding: 0 18px 0 19px; font-size: 17.500px; }
.mhead svg { width: 18px; height: 18px; margin-bottom: 1px; }
.mbody { height: 262px; display: flex; align-items: center; justify-content: center; padding-top: 18px; font-size: 20px; color: #999; }
.mfoot { display: flex; padding: 0 12px 0 13px; height: 45px; }
.btn { height: 45px; display: flex; align-items: center; gap: 13px; padding: 0 12px; font-size: 20px; color: #ff9100; border-radius: 3px; white-space: nowrap; }
.btn.soft { width: 175px; background: #ffbd66; }
.btn.flat { margin-left: 25px; }
.btn.solid { width: 140px; margin-left: auto; background: #ff9a1a; color: #fff; padding-left: 35px; }

/* downloads shelf */
.downloads { height: 59px; flex: none; background: #fff; display: flex; align-items: center; padding-left: 25px; font: 15px "Open Sans", sans-serif; color: #3c4043; }
.zip { width: 21px; height: 20px; margin-bottom: 4px; }
.zname { margin-left: 15px; width: 192px; letter-spacing: -.4px; }
.chev { width: 12px; height: 8px; }
.dsep { width: 1px; height: 45px; background: #cfd1d5; margin-left: 22px; }
.showall { margin-left: auto; width: 133px; height: 40px; border: 1px solid #dadce0; border-radius: 5px; text-align: center; line-height: 36px; letter-spacing: -.25px; margin-bottom: 1px; }
.dx { width: 12px; height: 12px; margin: 0 17px 1px 15px; }

/* taskbar */
.taskbar { height: 50px; flex: none; background: linear-gradient(90deg, #23373f 0, #20343d 1500px, #1b2a40 1580px, #1a2542); display: flex; color: #fff; }
.task { width: 62px; height: 50px; padding-right: 2px; display: flex; align-items: center; justify-content: center; background: linear-gradient(#76b9ed, #76b9ed) center bottom / 0 3px no-repeat; }
.task.tv { padding-right: 5px; }
.task.run { background-size: 51px 3px; }
.task.on { background-color: #4f6168; background-size: 62px 3px; }
.task.two { background-image: linear-gradient(90deg, #76b9ed 40px, #5b89ad 41px); padding-right: 0; }
.tray { margin-left: auto; display: flex; align-items: center; font: 15px "Open Sans", sans-serif; }
.bat { margin-left: 11px; }
.wifi { margin-left: 13px; }
.spk { margin-left: 10px; }
.lang { margin-left: 16px; width: 27px; letter-spacing: -.6px; }
.clock { margin-left: 15px; width: 74px; text-align: center; line-height: 23px; letter-spacing: -.6px; margin-top: -1px; }
.note { margin-left: 21px; width: 32px; height: 50px; position: relative; padding-top: 15px; }
.note b { position: absolute; left: 7px; top: 22px; width: 25px; height: 25px; border-radius: 50%; background: #333b45; border: 1px solid #8c9198; text-align: center; line-height: 22px; font-size: 14px; }
.desk { width: 1px; height: 50px; background: #7d8696; margin: 0 5px 0 13px; }
```
